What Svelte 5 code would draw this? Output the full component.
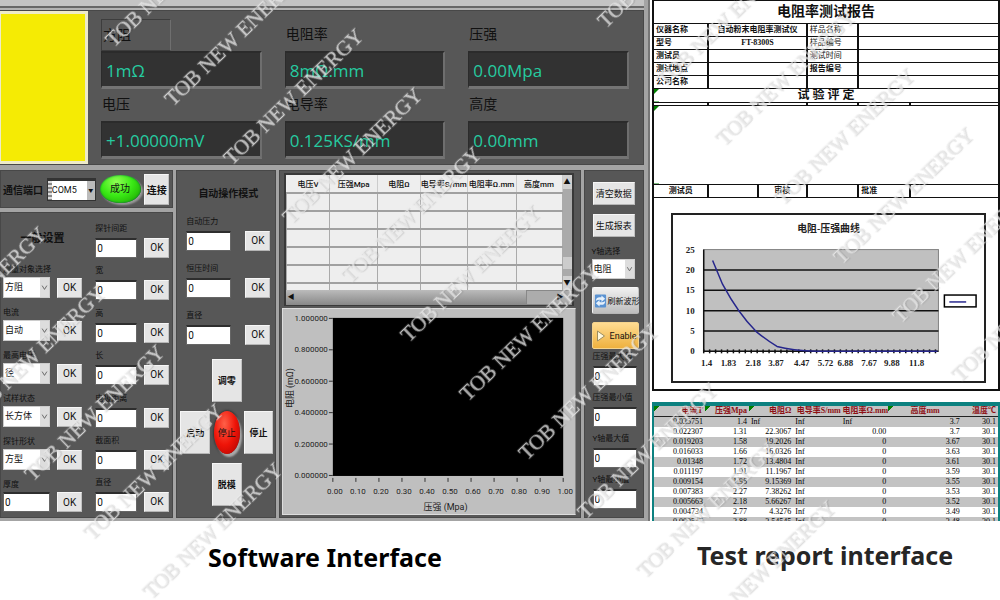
<script>
  const readouts = [
    ['方阻', '1mΩ'], ['电阻率', '8mΩ.mm'], ['压强', '0.00Mpa'],
    ['电压', '+1.00000mV'], ['电导率', '0.125KS/mm'], ['高度', '0.00mm']
  ];
  const leftFields = [
    ['测量对象选择', '方阻'], ['电流', '自动'], ['最高电压', '径'],
    ['试样状态', '长方体'], ['探针形状', '方型'], ['厚度', null]
  ];
  const rightFields = ['探针间距', '宽', '高', '长', '电极距离', '截面积', '直径'];
  const autoFields = ['自动压力', '恒压时间', '直径'];
  const limits = ['压强最大值', '压强最小值', 'Y轴最大值', 'Y轴最小值'];
  const heads = ['电压V', '压强Mpa', '电阻Ω', '电导率S/mm', '电阻率Ω.mm', '高度mm'];
  const yTicks = ['1.000000', '0.800000', '0.600000', '0.400000', '0.200000', '0.000000'];
  const xTicks = ['0.00', '0.10', '0.20', '0.30', '0.40', '0.50', '0.60', '0.70', '0.80', '0.90', '1.00'];
  const info = [
    ['仪器名称', '自动粉末电阻率测试仪', '样品名称'],
    ['型号', 'FT-8300S', '样品编号'],
    ['测试员', '', '测试时间'],
    ['测试地点', '', '报告编号'],
    ['公司名称', '', '']
  ];
  const curveX = [['1.4', 10], ['1.83', 32], ['2.18', 57], ['3.87', 80], ['4.47', 106], ['5.72', 130], ['6.88', 150], ['7.67', 174], ['9.88', 197], ['11.8', 222]];
  const rows = [
    ['0.025751', '1.4', 'Inf', 'Inf', 'Inf', '3.7', '30.1'],
    ['0.022307', '1.31', '22.3067', 'Inf', '0.00', '3.7', '30.1'],
    ['0.019203', '1.58', '19.2026', 'Inf', '0', '3.67', '30.1'],
    ['0.016033', '1.66', '16.0326', 'Inf', '0', '3.63', '30.1'],
    ['0.01348', '1.72', '13.4804', 'Inf', '0', '3.61', '30.1'],
    ['0.011197', '1.91', '11.1967', 'Inf', '0', '3.59', '30.1'],
    ['0.009154', '1.96', '9.15369', 'Inf', '0', '3.55', '30.1'],
    ['0.007383', '2.27', '7.38262', 'Inf', '0', '3.53', '30.1'],
    ['0.005663', '2.18', '5.66267', 'Inf', '0', '3.52', '30.1'],
    ['0.004734', '2.77', '4.3276', 'Inf', '0', '3.49', '30.1'],
    ['0.003545', '2.88', '3.54545', 'Inf', '0', '3.48', '30.1']
  ];
  // Watermark repeats along three diagonals, 59px apart in both directions.
  const marks = [[-93, 361, 5], [47, -14, 12], [598, 26, 7]].flatMap(([x, y, n]) =>
    Array.from({ length: n }, (_, i) => [x + i * 59, y + i * 59]));
</script>

<main>
  <section class="software">
    <div class="titlebar"></div>
    <div class="meters panel">
      <div class="lamp"></div>
      <div class="readouts">
        {#each readouts as [name, value], i}
          <div class="readout">
            <span class="rname" class:framed={i === 0}>{name}</span>
            <output>{value}</output>
          </div>
        {/each}
      </div>
    </div>

    <div class="work">
      <div class="left">
        <div class="com panel">
          <label for="port">通信端口</label>
          <span class="portbox"><i class="io"></i><select id="port"><option>COM5</option></select><i class="tri">▼</i></span>
          <span class="led">成功</span>
          <button class="link">连接</button>
        </div>
        <div class="general panel">
          <div class="col first">
            <h2>一般设置</h2>
            {#each leftFields as [name, value], i}
              <div class="field">
                <label for="l{i}">{name}</label>
                <div class="line">
                  {#if value}
                    <span class="sel"><select id="l{i}"><option>{value}</option></select><svg viewBox="0 0 9 20"><path d="M2 8l2.500 4L7 8" /></svg></span>
                  {:else}
                    <input id="l{i}" value="0" />
                  {/if}
                  <button>OK</button>
                </div>
              </div>
            {/each}
          </div>
          <div class="col second">
            {#each rightFields as name, i}
              <div class="field">
                <label for="r{i}">{name}</label>
                <div class="line"><input id="r{i}" value="0" /><button>OK</button></div>
              </div>
            {/each}
          </div>
        </div>
      </div>

      <div class="auto panel">
        <h2>自动操作模式</h2>
        <div class="autofields">
          {#each autoFields as name, i}
            <div class="field">
              <label for="a{i}">{name}</label>
              <div class="line"><input id="a{i}" value="0" /><button>OK</button></div>
            </div>
          {/each}
        </div>
        <div class="pad">
          <button class="up">调零</button>
          <button class="go">启动</button>
          <button class="stop">停止</button>
          <button class="halt">停止</button>
          <button class="down">脱模</button>
        </div>
      </div>

      <div class="centre panel">
        <div class="gridbox">
          <div class="gridrow">
            <table class="log">
              <colgroup><col style="width:15.600%" /><col style="width:17.400%" /><col style="width:15.500%" /><col style="width:17%" /><col style="width:17.800%" /><col /></colgroup>
              <thead><tr>{#each heads as h}<th>{h}</th>{/each}</tr></thead>
              <tbody>{#each Array(6) as _}<tr>{#each heads as _h}<td></td>{/each}</tr>{/each}</tbody>
            </table>
            <div class="vbar"><i>▲</i><b></b><i>▼</i></div>
          </div>
          <div class="hbar"><i>◀</i><b></b><i class="r">▶</i></div>
        </div>
        <div class="graph">
          <svg viewBox="0 0 292 207" preserveAspectRatio="none">
            <rect x="50" y="9" width="231" height="160" fill="#000" />
            <g stroke="#333" stroke-width="1">
              {#each yTicks as _, i}<path d="M46 {9.5 + i * 31.8}h4" />{/each}
              {#each xTicks as _, i}<path d="M{50 + i * 23.1} 171v4" />{/each}
            </g>
            <g text-anchor="end">{#each yTicks as t, i}<text x="45" y={12 + i * 31.8}>{t}</text>{/each}</g>
            <g text-anchor="middle">
              {#each xTicks as t, i}<text x={52 + i * 23.1} y="187">{t}</text>{/each}
              <text class="axis" x="163" y="203">压强 (Mpa)</text>
              <text class="axis" transform="translate(10 80) rotate(-90)">电阻 (mΩ)</text>
            </g>
          </svg>
        </div>
      </div>

      <div class="side panel">
        <button class="act">清空数据</button>
        <button class="act">生成报表</button>
        <div class="field ysel">
          <label for="yaxis">Y轴选择</label>
          <span class="sel"><select id="yaxis"><option>电阻</option></select><svg viewBox="0 0 9 20"><path d="M2 8l2.500 4L7 8" /></svg></span>
        </div>
        <button class="big wave">
          <svg viewBox="0 0 14 16"><rect x="1" y="1" width="12" height="14" rx="1" fill="#5b93d2" /><path d="M2 8q0-5 6-4V2l4 3.500-4 3.500V7Q4 6 2 8zM12 8q0 5-6 4v2l-4-3.500L6 7v2q4 1 6-1z" fill="#e5f0fb" /></svg>刷新波形
        </button>
        <button class="big enable">
          <svg viewBox="0 0 10 12"><path d="M2 1l7 5-7 5z" fill="#fff8dc" stroke="#9b8d60" /></svg>Enable
        </button>
        <div class="limits">
          {#each limits as name, i}
            <div class="field"><label for="m{i}">{name}</label><input id="m{i}" value="0" /></div>
          {/each}
        </div>
      </div>
    </div>
  </section>

  <section class="report">
    <div class="sheet">
      <table class="info">
        <colgroup><col style="width:15.800%" /><col style="width:14.400%" /><col style="width:14.200%" /><col style="width:15%" /><col style="width:15%" /><col /></colgroup>
        <tbody>
          <tr class="head"><th colspan="6">电阻率测试报告</th></tr>
          {#each info as [a, b, c], i}
            <tr><td>{a}</td><td colspan="2" class="mid">{b}</td><td class:faint={i < 3}>{c}</td><td colspan="2"></td></tr>
          {/each}
          <tr><th colspan="6" class="verdict flag">试 验 评 定</th></tr>
          <tr class="thin"><td></td><td></td><td></td><td></td><td></td><td></td></tr>
          <tr class="blank"><td colspan="6" class="flag"></td></tr>
          <tr><td class="mid">测试员</td><td></td><td class="mid">审核</td><td></td><td>批准</td><td></td></tr>
        </tbody>
      </table>
      <figure>
        <svg viewBox="0 0 314 168" preserveAspectRatio="none">
          <text x="157" y="17" text-anchor="middle" class="ct">电阻-压强曲线</text>
          <rect x="31" y="35" width="237" height="103" fill="#c0c0c0" stroke="#808080" />
          <g stroke="#111" stroke-width="1.500">
            {#each [1, 2, 3, 4, 5] as i}<path d="M31 {35 + i * 20.6}h237" />{/each}
            <path d="M31 35v103" />
            {#each Array(40) as _, i}<path d="M{31 + i * 6} 136v4" />{/each}
          </g>
          <g text-anchor="end">{#each [25, 20, 15, 10, 5, 0] as v, i}<text x="22" y={38 + i * 20.6}>{v}</text>{/each}</g>
          <g text-anchor="middle">{#each curveX as [t, x]}<text x={x + 24} y="153">{t}</text>{/each}</g>
          <path d="M40 46L50 70Q66 100 84 118Q95 127 105 133Q120 137 145 138H267" fill="none" stroke="#26268c" stroke-width="1.500" />
          <rect x="274" y="81" width="32" height="12" fill="#fff" stroke="#000" stroke-width="1.500" />
          <path d="M279 88h17" stroke="#26268c" stroke-width="1.500" />
        </svg>
      </figure>
    </div>
    <div class="data">
      <table>
        <colgroup><col style="width:14.800%" /><col style="width:12.800%" /><col style="width:12.900%" /><col style="width:13.800%" /><col style="width:13.800%" /><col style="width:21.400%" /><col /></colgroup>
        <thead><tr><th class="flag">电流T</th><th class="flag">压强Mpa</th><th class="flag">电阻Ω</th><th>电导率S/mm</th><th>电阻率Ω.mm</th><th class="flag mid">高度mm</th><th>温度℃</th></tr></thead>
        <tbody>{#each rows as r}<tr>{#each r as c}<td class:inf={c === 'Inf'}>{c}</td>{/each}</tr>{/each}</tbody>
      </table>
    </div>
  </section>

  <p class="cap one">Software Interface</p>
  <p class="cap two">Test report interface</p>

  <svg class="marks" aria-hidden="true">
    {#each marks as [x, y]}
      <text transform="translate({x + 8} {y + 3}) rotate(-44)">TOB NEW ENERGY</text>
    {/each}
  </svg>
</main>

<style>
  :global(body) { margin: 0; background: #fff; }
  * { box-sizing: border-box; }
  main {
    position: relative; overflow: hidden; min-height: 100vh;
    display: grid; grid-template-columns: 650fr 350fr; grid-template-rows: 1fr 80px;
    font-family: Roboto, "Noto Sans CJK SC", sans-serif; color: #111;
  }
  h2, p, figure { margin: 0; }
  button, input, select, output { font: inherit; color: inherit; }
  i { font-style: normal; }
  .software { display: flex; flex-direction: column; background: #a4a4a4; padding-right: 4px; border-right: 2px solid #777; min-width: 0; }
  .titlebar { height: 10px; background: linear-gradient(#c4c4c4 0 6px, #686868 6px 8px, #b4b4b4 8px); }
  .panel { background: #575757; border: 1px solid #484848; }
  .meters { display: flex; height: 155px; border-left: 0; }
  .lamp { width: 88px; background: #f5eb04; border: solid #eeebc9; border-width: 3px 3px 3px 1px; }
  .readouts { flex: 1; display: grid; grid-template-columns: repeat(3, 1fr); column-gap: 23px; row-gap: 5px; padding: 7px 14px 5px 13px; }
  .readout { display: flex; flex-direction: column; justify-content: flex-end; }
  .rname { font-size: 14px; line-height: 20px; height: 27px; width: 70px; padding-left: 1px; }
  .framed { height: 32px; padding-top: 5px; border: 1px solid #3d3d3d; border-right-color: #6f6f6f; }
  output { height: 38px; line-height: 36px; padding-left: 4px; color: #26cba0; background: #323232; border: 1px solid; border-width: 2px 2px 3px 1px; border-color: #2b2b2b #6e6e6e #747474 #2b2b2b; font-family: "Open Sans", "Noto Sans", sans-serif; font-size: 17px; }

  .work { flex: 1; display: grid; grid-template-columns: 175fr 101fr 304fr 61fr; gap: 3px; padding: 5px 0 3px; }
  .left { display: flex; flex-direction: column; gap: 4px; min-width: 0; }
  .com { height: 38px; display: flex; align-items: center; justify-content: space-between; padding: 0 3px 0 2px; font-size: 10px; font-weight: 700; }
  .portbox { display: flex; width: 49px; height: 23px; background: #fff; border: 1px solid #333; border-top-width: 3px; font-weight: 400; }
  .io { width: 4px; background: repeating-linear-gradient(#ddd 0 2px, #888 2px 4px); }
  .tri { width: 8px; background: #bbb; font-size: 5px; line-height: 18px; text-align: center; }
  select { appearance: none; border: 0; background: #fff; padding: 0 1px; min-width: 0; flex: 1; border-radius: 0; }
  #port { font-size: 9px; padding: 0; }
  .led { width: 41px; height: 28px; border-radius: 50%; font-weight: 400; text-align: center; line-height: 27px; background: radial-gradient(ellipse at 40% 25%, #8fff54, #3bea16 45%, #1ca800 90%); box-shadow: 2px 2px 2px #999, inset 0 0 2px #064; }
  button { padding: 0; border: 1px solid; border-color: #f6f6f6 #c2c2c2 #b5b5b5 #f6f6f6; background: #e5e5e5; }
  .link { width: 25px; height: 31px; font-size: 10px; font-weight: 700; }
  .general { flex: 1; display: grid; grid-template-columns: 80fr 75fr; gap: 13px; padding: 10px 3px 4px 2px; }
  .general .col { display: flex; flex-direction: column; justify-content: space-between; min-width: 0; }
  h2 { font-size: 11px; line-height: 16px; font-weight: 700; text-align: center; }
  .first h2 { padding: 8px 4px 0; height: 32px; }
  .field { display: flex; flex-direction: column; gap: 3px; font-size: 8px; line-height: 12px; min-width: 0; }
  .first .field { gap: 2px; line-height: 11px; }
  .field label { white-space: nowrap; }
  .line { display: flex; justify-content: space-between; align-items: center; gap: 7px; }
  .line button { width: 25px; height: 20px; font-size: 10px; flex: none; }
  input { flex: 1; min-width: 0; width: 100%; height: 20px; border: 1px solid #666; border-top: 2px solid #2e2e2e; padding: 0 1px; background: #fff; border-radius: 0; font-size: 10px; }
  .sel { display: flex; height: 21px; flex: 1; min-width: 0; background: #fff; font-size: 9px; border: 1px solid #ccc; }
  .sel svg { width: 9px; background: #ddd; fill: none; stroke: #666; }

  .auto { padding: 12px 5px 6px 9px; display: flex; flex-direction: column; }
  .auto h2 { padding: 3px 0 9px; font-size: 10px; }
  .auto h2 + div { padding: 5px 0 0; }
  .autofields { display: flex; flex-direction: column; gap: 12px; }
  .autofields .line { gap: 14px; }
  .pad { margin: 14px -3px 0 -6px; display: grid; grid-template-columns: 30fr 30fr 30fr; grid-template-rows: 43px 43px 43px; gap: 9px 2px; font-size: 9px; font-weight: 700; }
  .up, .down { grid-column: 2; }
  .up { grid-row: 1; } .down { grid-row: 3; }
  .go, .stop, .halt { grid-row: 2; }
  .stop { border: 0; border-radius: 50%; margin: 0 2px; background: radial-gradient(ellipse at 40% 30%, #ff6048, #ee1408 50%, #a40000); box-shadow: 2px 3px 2px #aaa, 0 0 2px 1px #333; font-weight: 400; }

  .centre { padding: 2px 4px 2px 2px; display: flex; flex-direction: column; gap: 2px; min-width: 0; }
  .gridbox { border: 2px solid #393939; border-width: 2px 2px 1px; margin: 0 2px; background: #eee; }
  .gridrow { display: flex; height: 115px; overflow: hidden; }
  .log { flex: 1; width: 100%; height: 125px; table-layout: fixed; border-collapse: collapse; font-size: 8px; }
  .log th { font-weight: 500; height: 18px; padding: 0; white-space: nowrap; border-right: 1px solid #ccc; }
  .log td { height: 18px; padding: 0; border: 1px solid #aaa; border-top: 2px solid #a0a0a0; }
  .vbar { width: 9px; background: #aaa; display: flex; flex-direction: column; justify-content: space-between; font-size: 7px; line-height: 14px; text-align: center; }
  .vbar i { background: #d0d0d0; } .vbar b { height: 12px; margin-top: 60px; background: #ccc; }
  .hbar { display: flex; height: 15px; justify-content: space-between; background: linear-gradient(#bbb, #888); font-size: 7px; line-height: 15px; }
  .hbar b { flex: 1; } .hbar i { width: 9px; text-align: center; } .hbar .r { width: 46px; background: #acacac; border: 1px solid #888; text-align: right; line-height: 13px; padding-right: 7px; }
  .graph { flex: 1; background: #bfbfbf; border: 1px solid #ddd; border-right-color: #888; min-height: 0; }
  .graph svg { display: block; width: 100%; height: 0; min-height: 100%; }
  .graph text { font-size: 8px; fill: #222; }
  .graph .axis { font-size: 9px; }

  .side { display: flex; flex-direction: column; padding: 11px 4px 5px 7px; min-width: 0; }
  .act { height: 23px; margin: 0 4px 9px 1px; font-size: 9px; }
  .ysel { gap: 1px; }
  .ysel .sel { flex: none; margin-right: 4px; height: 20px; }
  .big { display: flex; align-items: center; gap: 1px; height: 27px; margin-top: 8px; padding: 0 1px; font-size: 8px; border-radius: 2px; background: linear-gradient(#f0f0f0, #bdbdbd); white-space: nowrap; }
  .big svg { width: 13px; height: 16px; flex: none; }
  .enable { gap: 3px; margin-top: 8px; font-size: 9px; background: linear-gradient(#ffdc92, #eeb13f); border-color: #f5d48d; }
  .enable svg { height: 12px; }
  .limits { flex: 1; display: flex; flex-direction: column; justify-content: space-between; padding: 2px 2px 2px 1px; }
  .limits .field { gap: 3px; }
  .limits input { flex: none; }

  .report { padding-left: 2px; display: flex; flex-direction: column; gap: 11px; min-width: 0; font-family: "Liberation Serif", "Noto Sans CJK SC", serif; }
  .sheet { flex: 1; border: 2px solid #111; border-top-width: 1px; display: flex; flex-direction: column; }
  .info { width: 100%; table-layout: fixed; border-collapse: collapse; font-size: 8px; font-weight: 700; line-height: 11px; }
  .info td, .info th { border: 1px solid #111; border-width: 1px 2px; padding: 0 2px; height: 13px; white-space: nowrap; overflow: hidden; }
  .info tr > :first-child { border-left: 0; } .info tr > :last-child { border-right: 0; }
  .info .head th { height: 22px; font-size: 14px; line-height: 18px; border-top: 0; }
  .info .verdict { height: 14px; font-size: 12px; line-height: 12px; }
  .info .thin td { height: 3px; line-height: 1px; }
  .info .blank td { height: 79px; }
  .mid { text-align: center; }
  .faint { font-weight: 400; }
  .flag { background-image: linear-gradient(135deg, #008000 4px, transparent 4px); }
  figure { flex: 1; display: flex; min-height: 160px; margin: 15px 12px 6px 17px; border: 2px solid #222; }
  figure svg { flex: 1; min-width: 0; height: auto; max-height: 166px; overflow: visible; }
  figure text { font-size: 9px; font-weight: 700; fill: #222; font-family: "Liberation Serif", "Noto Sans CJK SC", serif; }
  figure .ct { font-size: 10px; }
  .data { height: 119px; overflow: hidden; border: 2px solid #0c8180; border-top-width: 4px; border-bottom: 0; }
  .data table { width: 100%; table-layout: fixed; border-collapse: collapse; font-size: 8px; line-height: 10px; }
  .data th { height: 10px; padding: 0 2px; color: #8e1014; background-color: #c4c4c4; text-align: right; white-space: nowrap; border-bottom: 1px solid #222; }
  .data th.mid { text-align: center; }
  .data th:nth-child(4), .data th:nth-child(5) { padding: 0; }
  .data td { height: 10px; padding: 0 2px; text-align: right; color: #000; }
  .data tbody tr:nth-child(odd) { background: #c3c3c3; }
  .data td.inf { text-align: left; }

  .cap { text-align: center; font: 700 25px/32px "Noto Sans", sans-serif; padding-top: 20px; color: #000; }
  .two { color: #262626; padding-top: 18px; }
  .marks { position: absolute; inset: 0; width: 100%; height: 100%; pointer-events: none; }
  .marks text { font: 21px "Liberation Serif", serif; fill: rgba(235, 235, 235, .75); stroke: rgba(235, 235, 235, .3); stroke-width: 1px; filter: drop-shadow(1px 1px 0 rgba(0, 0, 0, .16)); }
</style>
